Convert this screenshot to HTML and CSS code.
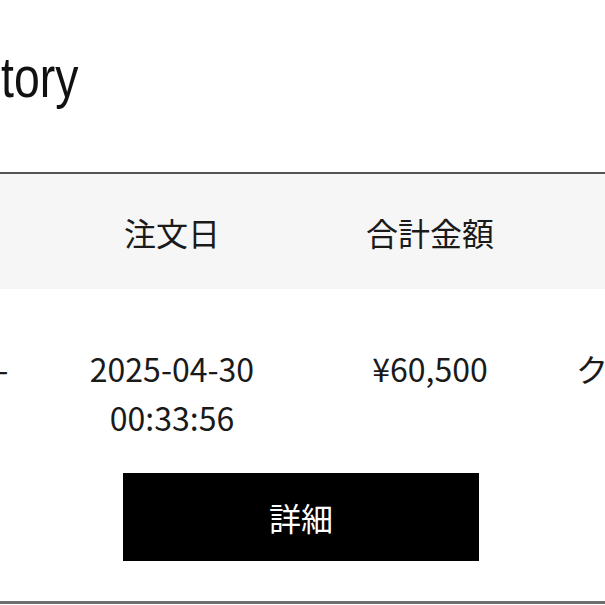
FILE: index.html
```html
<!DOCTYPE html>
<html lang="ja">
<head>
<meta charset="utf-8">
<title>Order History</title>
<link rel="stylesheet" href="styles.css">
</head>
<body>
<main class="page">
  <header class="title-bar">
    <h1 class="title">Order History</h1>
  </header>
  <section class="orders">
    <div class="orders-head">
      <div class="cell">注文番号</div>
      <div class="cell">注文日</div>
      <div class="cell">合計金額</div>
      <div class="cell">支払方法</div>
    </div>
    <div class="order">
      <div class="order-row">
        <div class="cell">2504300033-</div>
        <div class="cell">2025-04-30<br>00:33:56</div>
        <div class="cell">¥60,500</div>
        <div class="cell">クレジット決済</div>
      </div>
      <div class="order-actions">
        <button class="detail-btn" type="button">詳細</button>
      </div>
    </div>
  </section>
</main>
</body>
</html>
```

FILE: styles.css
```css
html, body {
  margin: 0;
  padding: 0;
  overflow: hidden;
  background: #ffffff;
}

body {
  font-family: "Noto Sans CJK JP", "Noto Sans", sans-serif;
  color: #1a1a1a;
}

.page {
  width: 1032px;
  margin-left: -215px;
}

.title-bar {
  height: 172px;
  padding-top: 44px;
  box-sizing: border-box;
}

.title {
  margin: 0 0 0 -37px;
  font-family: "Liberation Sans", Arial, sans-serif;
  font-weight: 400;
  font-size: 58px;
  line-height: 66px;
  color: #111;
  transform: scaleX(0.8);
  transform-origin: 273px 0;
  white-space: nowrap;
}

.orders {
  border-top: 2px solid #555;
  border-bottom: 3px solid #6e6e6e;
}

.orders-head,
.order-row {
  display: grid;
  grid-template-columns: repeat(4, 1fr);
}

.orders-head {
  background: #f6f6f6;
  height: 115px;
  align-items: center;
  font-size: 32px;
  line-height: 40px;
}

.cell {
  text-align: center;
}

.order-row {
  padding-top: 55px;
  font-size: 32px;
  line-height: 49px;
}

.order-actions {
  display: flex;
  justify-content: center;
  padding: 31px 0 40px;
}

.detail-btn {
  width: 356px;
  height: 88px;
  border: 0;
  background: #000;
  color: #fff;
  font-family: "Noto Sans CJK JP", "Noto Sans", sans-serif;
  font-size: 32px;
  padding: 0;
}
```
